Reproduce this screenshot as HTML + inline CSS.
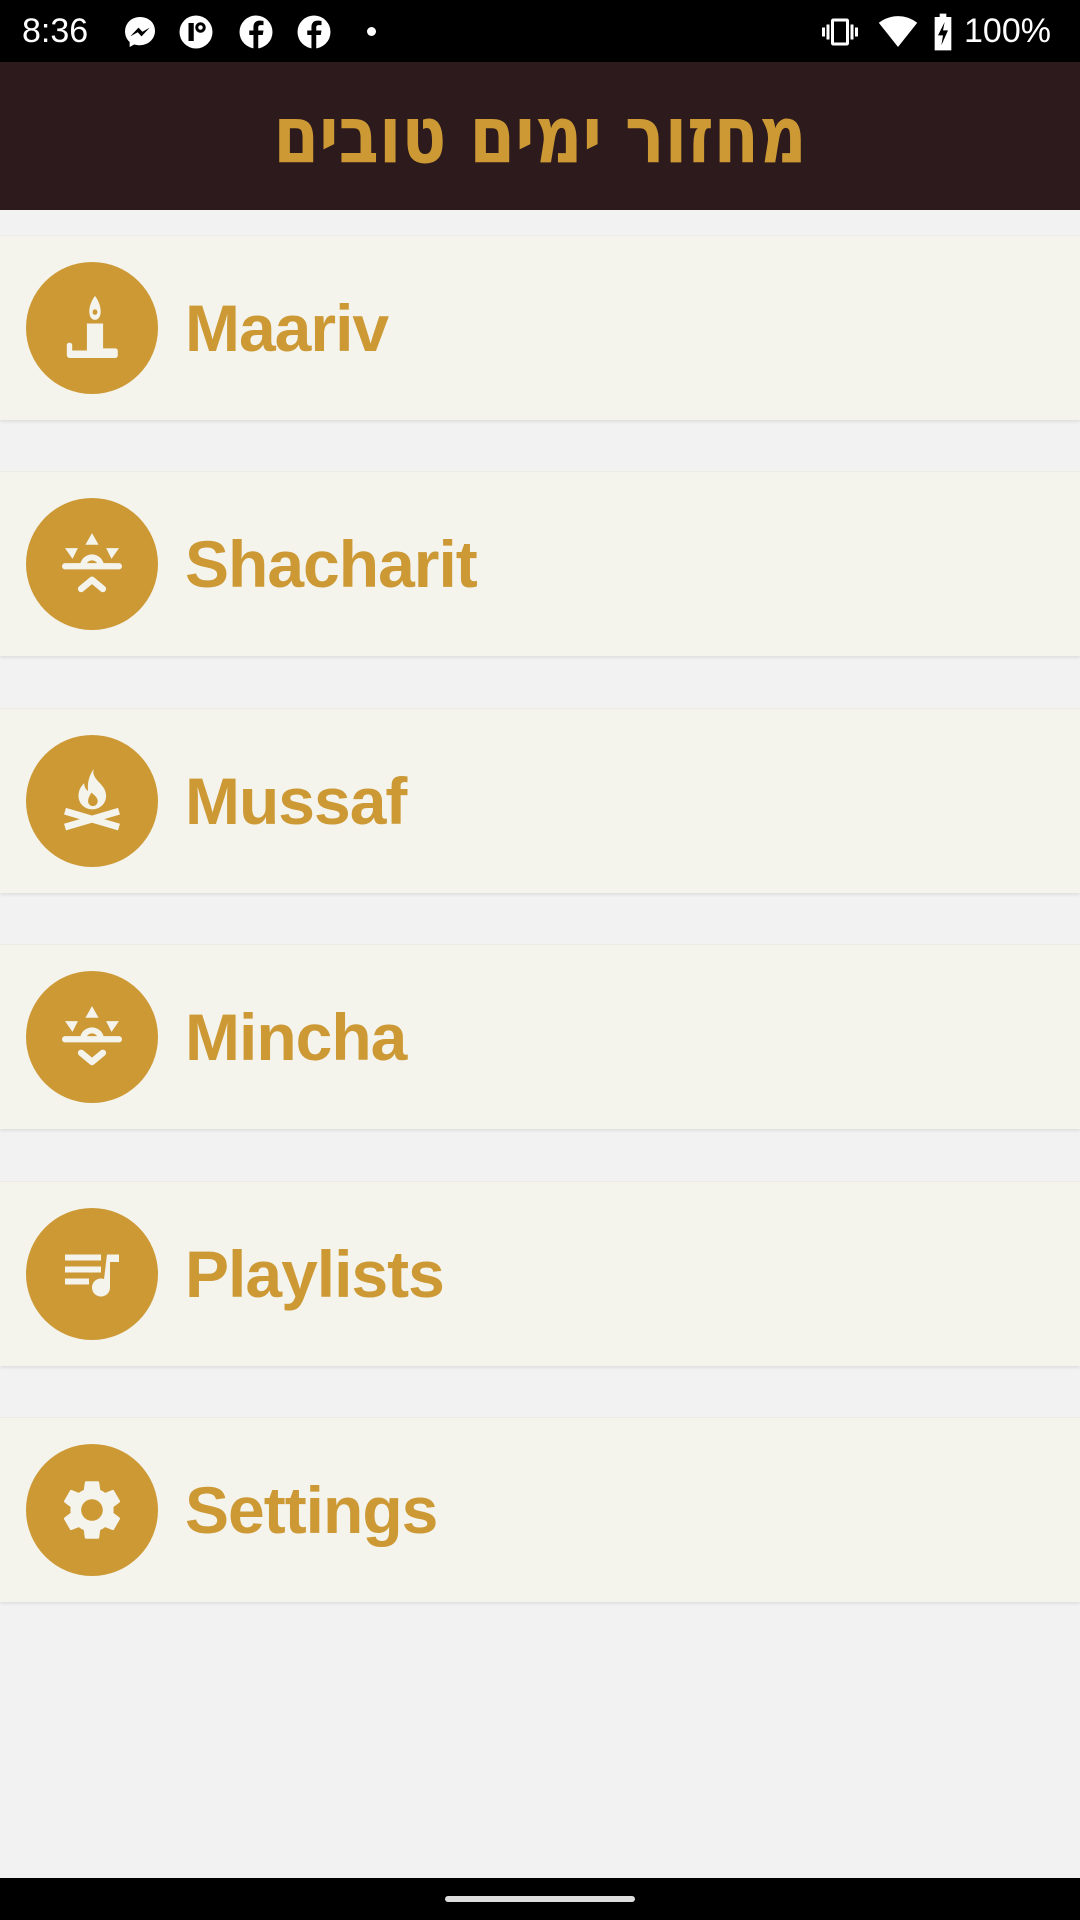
<!DOCTYPE html>
<html><head><meta charset="utf-8"><style>
*{margin:0;padding:0;box-sizing:border-box}
body{width:1080px;height:1920px;background:#f2f2f2;font-family:"Liberation Sans",sans-serif;position:relative;overflow:hidden}
.sb{position:absolute;top:0;left:0;width:1080px;height:62px;background:#000;color:#fff;font-size:34px}
.hd{position:absolute;top:62px;left:0;width:1080px;height:148px;background:#2d1a1d;color:#cc9935;text-align:center;font:bold 66px "DejaVu Sans",sans-serif;line-height:148px}
.hd span{display:inline-block;transform:scaleY(1.2)}
.row{position:absolute;left:0;width:1080px;height:185px;background:#f4f3ec;box-shadow:0 2px 3px rgba(0,0,0,.08);border-top:1px solid #ecebe6}
.c{position:absolute;left:26px;top:26px;width:132px;height:132px;border-radius:50%;background:#cc9935}
.c svg{position:absolute;left:30px;top:30px;width:72px;height:72px}
.t{position:absolute;left:185px;top:0;line-height:185px;font-size:66px;letter-spacing:-1px;font-weight:bold;color:#cc9935}
.nav{position:absolute;left:0;top:1878px;width:1080px;height:42px;background:#000}
.nav div{position:absolute;left:445px;top:18px;width:190px;height:6px;border-radius:3px;background:#ddd}
</style></head><body>
<div class="sb">
<span style="position:absolute;left:22px;top:12px">8:36</span>
<svg style="position:absolute;left:122px;top:14px" width="36" height="36" viewBox="0 0 24 24"><path fill="#fff" d="M12 2C6.4 2 2 6.1 2 11.6c0 2.9 1.2 5.4 3.1 7.1V22l3-1.7c1.2.3 2.5.5 3.9.5 5.6 0 10-4.1 10-9.6S17.6 2 12 2zm1 12.9l-2.5-2.7-5 2.7 5.5-5.8 2.6 2.7 4.9-2.7-5.5 5.8z"/></svg>
<svg style="position:absolute;left:178px;top:14px" width="36" height="36" viewBox="0 0 24 24"><circle cx="12" cy="12" r="11" fill="#fff"/><rect x="7" y="6" width="3.5" height="12" fill="#000"/><circle cx="15" cy="9" r="2.5" fill="none" stroke="#000" stroke-width="2"/></svg>
<svg style="position:absolute;left:238px;top:14px" width="36" height="36" viewBox="0 0 24 24"><circle cx="12" cy="12" r="11" fill="#fff"/><path fill="#000" d="M13.5 23V14h3l.5-3h-3.5V9c0-1 .4-1.6 1.7-1.6H17V4.6c-.4 0-1.5-.2-2.6-.2-2.5 0-4.1 1.5-4.1 4.3V11H7.5v3h2.8v9z"/></svg>
<svg style="position:absolute;left:296px;top:14px" width="36" height="36" viewBox="0 0 24 24"><circle cx="12" cy="12" r="11" fill="#fff"/><path fill="#000" d="M13.5 23V14h3l.5-3h-3.5V9c0-1 .4-1.6 1.7-1.6H17V4.6c-.4 0-1.5-.2-2.6-.2-2.5 0-4.1 1.5-4.1 4.3V11H7.5v3h2.8v9z"/></svg>
<div style="position:absolute;left:367px;top:27px;width:9px;height:9px;border-radius:50%;background:#fff"></div>
<svg style="position:absolute;left:822px;top:14px" width="36" height="36" viewBox="0 0 24 24"><path fill="#fff" d="M0 15h2V9H0v6zm3 2h2V7H3v10zm19-8v6h2V9h-2zm-3 8h2V7h-2v10zM16.5 3h-9C6.67 3 6 3.67 6 4.5v15c0 .83.67 1.5 1.5 1.5h9c.83 0 1.5-.67 1.5-1.5v-15c0-.83-.67-1.5-1.5-1.5zM16 19H8V5h8v14z"/></svg>
<svg style="position:absolute;left:878px;top:12px" width="40" height="40" viewBox="0 0 24 24"><path fill="#fff" d="M12 21L23.5 6.5C23 6.1 18.6 2.5 12 2.5S1 6.1.5 6.5z"/></svg>
<svg style="position:absolute;left:930px;top:12px" width="26" height="40" viewBox="0 0 12 24"><path fill="#fff" d="M4 1h4v2h3v20H1V3h3z"/><path fill="#000" d="M7 6L3 14h3l-1 6 4-9H6z"/></svg>
<span style="position:absolute;left:964px;top:12px">100%</span>
</div>
<div class="hd"><span>מחזור ימים טובים</span></div>

<div class="row" style="top:235px"><div class="c"><svg viewBox="0 0 24 24"><path fill="#f4f3ec" fill-rule="evenodd" d="M13 1.3c-1.3 1.8-1.9 3.6-1.9 5.2 0 1.7.8 2.8 1.9 2.8s1.9-1.1 1.9-2.8c0-1.6-.6-3.4-1.9-5.2zM13 5.8c-.5 0-.8.4-.8.9s.3.9.8.9.8-.4.8-.9-.3-.9-.8-.9z"/><path fill="#f4f3ec" d="M10.3 10.5h5.4v8.3h4.1c.5 0 .8.4.8.9v1.4c0 .5-.3.9-.8.9H4.6c-.6 0-1-.4-1-1v-3.4c0-.4.4-.7.9-.7s.9.3.9.7v1.9h4.9z"/></svg></div><div class="t">Maariv</div></div>

<div class="row" style="top:471px"><div class="c"><svg viewBox="0 0 24 24"><g fill="#f4f3ec"><path d="M12 1.7l2.2 3.9h-4.4z"/><path d="M3 6.7h4.3l-1.8 3.6z"/><path d="M21 6.7h-4.3l1.8 3.6z"/><path d="M8 12.8a4 4 0 0 1 8 0h-2a2 2 0 0 0-4 0z"/><rect x="2" y="11.7" width="20" height="2.1" rx="1.05"/></g><path d="M8.4 20.3l3.6-3 3.6 3" stroke="#f4f3ec" stroke-width="2.2" fill="none" stroke-linecap="round" stroke-linejoin="round"/></svg></div><div class="t">Shacharit</div></div>

<div class="row" style="top:708px"><div class="c"><svg viewBox="0 0 24 24"><path fill="#f4f3ec" d="M12.6 1.3c-.6 1.8.5 3.2 1.9 4.6 1.2 1.2 2.2 2.6 2.2 4.4 0 2.6-2.1 4.5-4.6 4.5s-4.6-1.9-4.6-4.5c0-1.8.8-3.2 1.9-4.2 0 1.2.6 2.1 1.3 2.6-.4-3 .6-5.6 1.9-7.4zM11.8 9.2c-.6 1-1.1 1.9-1.1 2.8 0 1 .7 1.7 1.6 1.7s1.6-.7 1.6-1.7c0-1.1-1-1.9-2.1-2.8z"/><path d="M3 15.4l18 5.3M21 15.4L3 20.7" stroke="#f4f3ec" stroke-width="2.3"/></svg></div><div class="t">Mussaf</div></div>

<div class="row" style="top:944px"><div class="c"><svg viewBox="0 0 24 24"><g fill="#f4f3ec"><path d="M12 1.7l2.2 3.9h-4.4z"/><path d="M3 6.7h4.3l-1.8 3.6z"/><path d="M21 6.7h-4.3l1.8 3.6z"/><path d="M8 12.8a4 4 0 0 1 8 0h-2a2 2 0 0 0-4 0z"/><rect x="2" y="11.7" width="20" height="2.1" rx="1.05"/></g><path d="M8.4 17.3l3.6 3 3.6-3" stroke="#f4f3ec" stroke-width="2.2" fill="none" stroke-linecap="round" stroke-linejoin="round"/></svg></div><div class="t">Mincha</div></div>

<div class="row" style="top:1181px"><div class="c"><svg viewBox="0 0 24 24"><path fill="#f4f3ec" d="M3 5.5h12v2H3zm0 4h12v2H3zm0 4h8v2H3zm14-8h4v2.5h-3v8.5c0 1.7-1.3 3-3 3s-3-1.3-3-3 1.3-3 3-3c.4 0 .7.1 1 .2z"/></svg></div><div class="t">Playlists</div></div>

<div class="row" style="top:1417px"><div class="c"><svg viewBox="0 0 24 24"><path fill="#f4f3ec" d="M19.14 12.94c.04-.3.06-.61.06-.94 0-.32-.02-.64-.07-.94l2.03-1.58a.49.49 0 0 0 .12-.61l-1.92-3.32a.488.488 0 0 0-.59-.22l-2.39.96c-.5-.38-1.03-.7-1.62-.94l-.36-2.54a.484.484 0 0 0-.48-.41h-3.84c-.24 0-.43.17-.47.41l-.36 2.54c-.59.24-1.13.57-1.62.94l-2.39-.96c-.22-.08-.47 0-.59.22L2.74 8.87c-.12.21-.08.47.12.61l2.03 1.58c-.05.3-.09.63-.09.94s.02.64.07.94l-2.03 1.58a.49.49 0 0 0-.12.61l1.92 3.32c.12.22.37.29.59.22l2.39-.96c.5.38 1.03.7 1.62.94l.36 2.54c.05.24.24.41.48.41h3.84c.24 0 .44-.17.47-.41l.36-2.54c.59-.24 1.13-.56 1.62-.94l2.39.96c.22.08.47 0 .59-.22l1.92-3.32c.12-.22.07-.47-.12-.61l-2.01-1.58zM12 15.6c-1.98 0-3.6-1.62-3.6-3.6s1.62-3.6 3.6-3.6 3.6 1.62 3.6 3.6-1.62 3.6-3.6 3.6z"/></svg></div><div class="t">Settings</div></div>

<div class="nav"><div></div></div>
</body></html>
